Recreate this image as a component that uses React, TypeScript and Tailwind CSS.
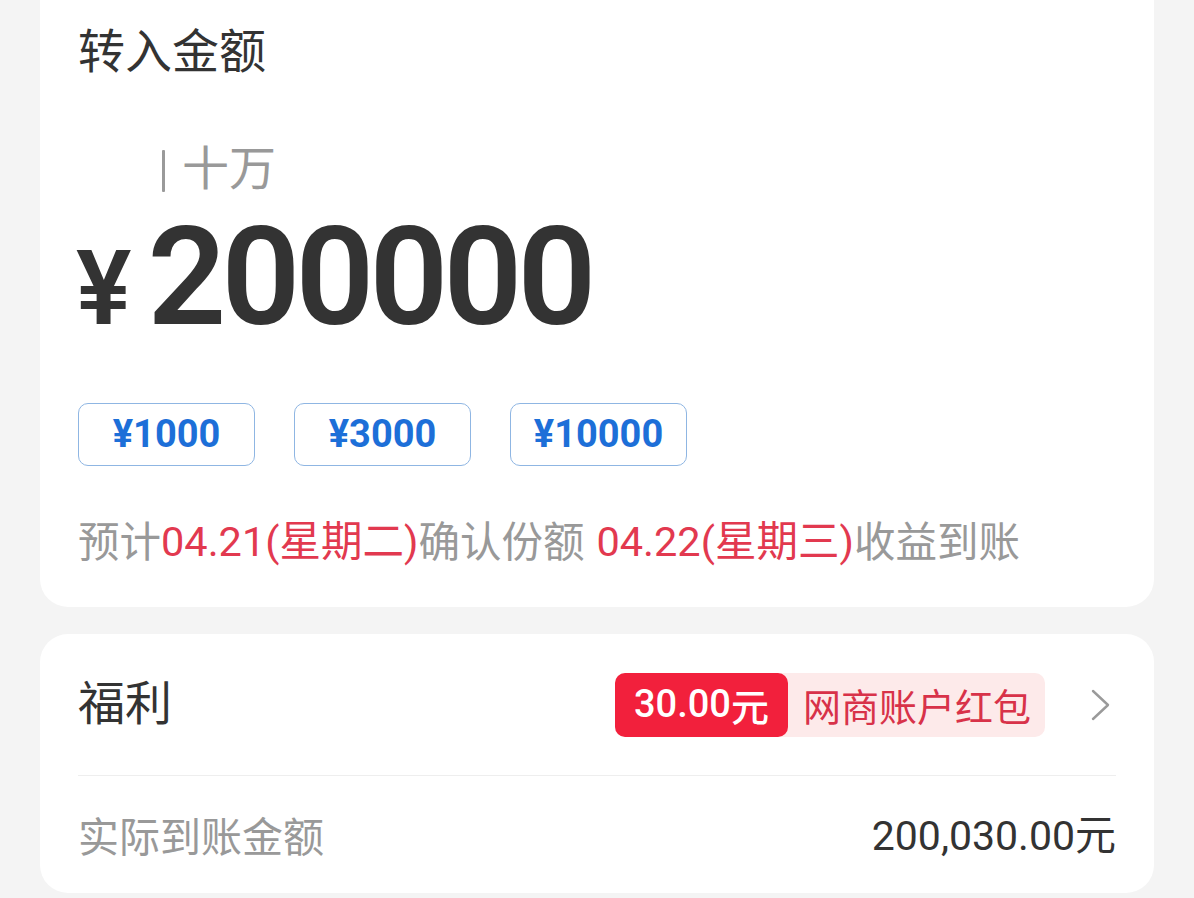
import React from "react";

const cjk = { fontFamily: '"Noto Sans CJK SC", "Noto Sans", sans-serif' };
const num = { fontFamily: 'Roboto, "Noto Sans CJK SC", sans-serif' };

export default function App() {
  return (
    <div className="w-[1194px] h-[898px] bg-[#f4f4f4] overflow-hidden" style={cjk}>
      <div className="mx-[40px] bg-white rounded-b-[28px] px-[38px] pb-[37px]">
        <div className="h-[94px] flex items-center text-[47px] text-[#333] leading-none">转入金额</div>
        <div className="mt-[41px] h-[58px] flex items-center pl-[84px] text-[#999] text-[47px] leading-none">
          <span className="w-[3px] h-[42px] bg-[#9a9a9a] mr-[17px] mt-[14px] rounded-[1px]" />
          <span>十万</span>
        </div>
        <div className="pt-[15px] h-[151px] flex items-baseline text-[#333] leading-none" style={num}>
          <span className="text-[104px] font-semibold ml-[-2px] mr-[16px]">¥</span>
          <span className="text-[138px] font-semibold tracking-[-0.035em]">200000</span>
        </div>
        <div className="mt-[59px] flex gap-[39px]">
          {["¥1000", "¥3000", "¥10000"].map((t) => (
            <div
              key={t}
              className="w-[177px] h-[63px] rounded-[10px] border border-[#8fb6e3] flex items-center justify-center text-[#1d6fd8] text-[38px] font-bold"
              style={num}
            >
              {t}
            </div>
          ))}
        </div>
        <div className="mt-[44px] h-[60px] flex items-center text-[41.5px] text-[#999] leading-none whitespace-nowrap">
          <span>预计</span>
          <span className="text-[#e2394f]">
            <span style={num}>04.21(</span>星期二<span style={num}>)</span>
          </span>
          <span>确认份额</span>
          <span className="text-[#e2394f] ml-[12px]">
            <span style={num}>04.22(</span>星期三<span style={num}>)</span>
          </span>
          <span>收益到账</span>
        </div>
      </div>

      <div className="mx-[40px] mt-[27px] bg-white rounded-[28px] px-[38px]">
        <div className="h-[141px] flex items-center justify-between">
          <span className="text-[47px] text-[#333] leading-none mb-[10px]">福利</span>
          <div className="flex items-center">
            <div className="flex items-center h-[64px] rounded-[10px] bg-[#fdeaea]">
              <span className="h-full flex items-center bg-[#f2203c] rounded-[10px] px-[19px] text-white text-[38px] font-medium" style={num}>
                30.00<span style={cjk}>元</span>
              </span>
              <span className="pl-[15px] pr-[14px] text-[38px] text-[#d83249] leading-none">网商账户红包</span>
            </div>
            <svg className="ml-[44px] mr-[3px]" width="24" height="34" viewBox="0 0 24 34" fill="none">
              <path d="M4 3 L19 17 L4 31" stroke="#9a9a9a" strokeWidth="2.4" strokeLinecap="round" strokeLinejoin="round" />
            </svg>
          </div>
        </div>
        <div className="h-px bg-[#eeeeee]" />
        <div className="h-[117px] flex items-center justify-between">
          <span className="text-[41px] text-[#999] leading-none">实际到账金额</span>
          <span className="text-[41px] text-[#333] leading-none" style={num}>
            200,030.00<span style={cjk}>元</span>
          </span>
        </div>
      </div>
    </div>
  );
}
